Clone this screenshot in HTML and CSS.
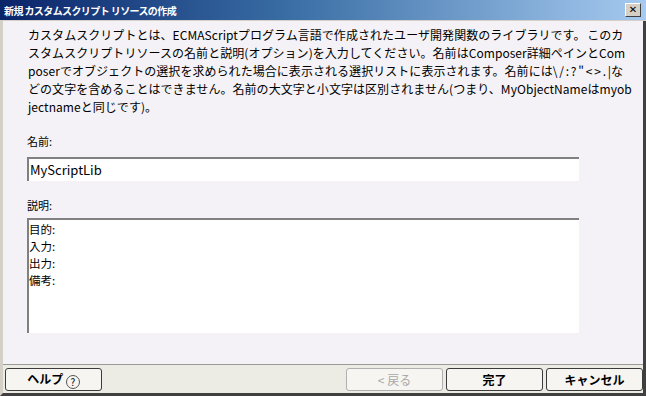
FILE: index.html
```html
<!DOCTYPE html>
<html lang="ja">
<head>
  <meta charset="UTF-8" />
  <title>新規 カスタムスクリプト リソースの作成</title>
  <link rel="stylesheet" href="styles.css">
</head>
<body>

<div class="ventana">
  <div class="titulo">
    <span>新規 カスタムスクリプト リソースの作成</span>
    <button class="cerrar">✕</button>
  </div>

  <div class="contenido">
    <p class="intro">カスタムスクリプトとは、ECMAScriptプログラム言語で作成されたユーザ開発関数のライブラリです。 このカ<br>スタムスクリプトリソースの名前と説明(オプション)を入力してください。名前はComposer詳細ペインとCom<br>poserでオブジェクトの選択を求められた場合に表示される選択リストに表示されます。名前には\ / : ? " &lt; &gt; . |な<br>どの文字を含めることはできません。名前の大文字と小文字は区別されません(つまり、MyObjectNameはmyob<br>jectnameと同じです)。</p>

    <label class="etiqueta">名前:</label>
    <div class="campo">MyScriptLib</div>

    <label class="etiqueta segunda">説明:</label>
    <div class="area">
      <div>目的:</div>
      <div>入力:</div>
      <div>出力:</div>
      <div>備考:</div>
    </div>
  </div>

  <div class="botones">
    <button class="boton">ヘルプ <span class="ayuda">?</span></button>
    <div class="derecha">
      <button class="boton inactivo">&lt;&nbsp;戻る</button>
      <button class="boton">完了</button>
      <button class="boton">キャンセル</button>
    </div>
  </div>
</div>

</body>
</html>
```

FILE: styles.css
```css
* {
  box-sizing: border-box;
}
body {
  margin: 0;
  width: 646px;
  height: 396px;
  overflow: hidden;
  font-family: "Noto Sans CJK JP", "Liberation Sans", sans-serif;
  font-size: 12px;
  color: #000;
}
.ventana {
  height: 396px;
  display: flex;
  flex-direction: column;
  background: #f4f2f6;
  border-left: 3px solid #d4d0c8;
  border-right: 3px solid #404040;
  border-bottom: 3px solid #404040;
}
/* barra de titulo */
.titulo {
  height: 21px;
  margin-left: -3px;
  margin-right: -3px;
  padding: 0 5px 0 4px;
  display: flex;
  align-items: center;
  justify-content: space-between;
  background: linear-gradient(to right, #0a246a 0%, #3a6ea5 45%, #a6caf0 100%);
  color: white;
  font-size: 10px;
  letter-spacing: -0.6px;
  font-weight: bold;
  border-bottom: 1px solid #d4d0c8;
}
.cerrar {
  width: 16px;
  height: 14px;
  padding: 0;
  font-size: 10px;
  line-height: 10px;
  font-weight: bold;
  color: #000;
  background: #d4d0c8;
  border: 1px solid;
  border-color: #fff #404040 #404040 #fff;
  font-family: "DejaVu Sans", sans-serif;
}
.contenido {
  flex: 1;
  padding: 5px 0 0 24px;
  display: flex;
  flex-direction: column;
}
.intro {
  margin: 0 0 0 1px;
  line-height: 18px;
  font-size: 12px;
  letter-spacing: 0.05px;
  word-spacing: -1px;
  white-space: nowrap;
}
.etiqueta {
  display: block;
  font-size: 11px;
  line-height: 14px;
  margin-top: 18px;
  margin-bottom: 9px;
}
.segunda {
  margin-top: 17px;
  margin-bottom: 6px;
}
.campo {
  height: 24px;
  width: 552px;
  background: #fff;
  border-top: 2px solid #808080;
  border-left: 2px solid #808080;
  padding: 0 1px;
  line-height: 21px;
  font-size: 13px;
}
.area {
  height: 115px;
  width: 552px;
  background: #fff;
  border-top: 2px solid #808080;
  border-left: 2px solid #808080;
  padding: 1px 0 0;
  line-height: 17px;
  font-size: 11.5px;
}
/* botones inferiores */
.botones {
  height: 29px;
  background: #ecebe4;
  border-top: 1px solid #9c9a94;
  display: flex;
  justify-content: space-between;
  align-items: center;
  padding: 0 0 0 2px;
}
.derecha {
  display: flex;
  gap: 3px;
}
.boton {
  width: 97px;
  height: 23px;
  background: #f6f5f1;
  border: 1px solid #3c3c3c;
  border-radius: 3px;
  font-family: "Noto Sans CJK JP", sans-serif;
  font-weight: bold;
  font-size: 12px;
  padding: 0;
}
.inactivo {
  color: #a8a8a8;
  border-color: #b0b0b0;
  font-weight: normal;
}
.ayuda {
  display: inline-block;
  width: 14px;
  height: 14px;
  border: 1px solid #555;
  border-radius: 50%;
  font-size: 10px;
  line-height: 12px;
  font-weight: normal;
  vertical-align: -2px;
}
```
